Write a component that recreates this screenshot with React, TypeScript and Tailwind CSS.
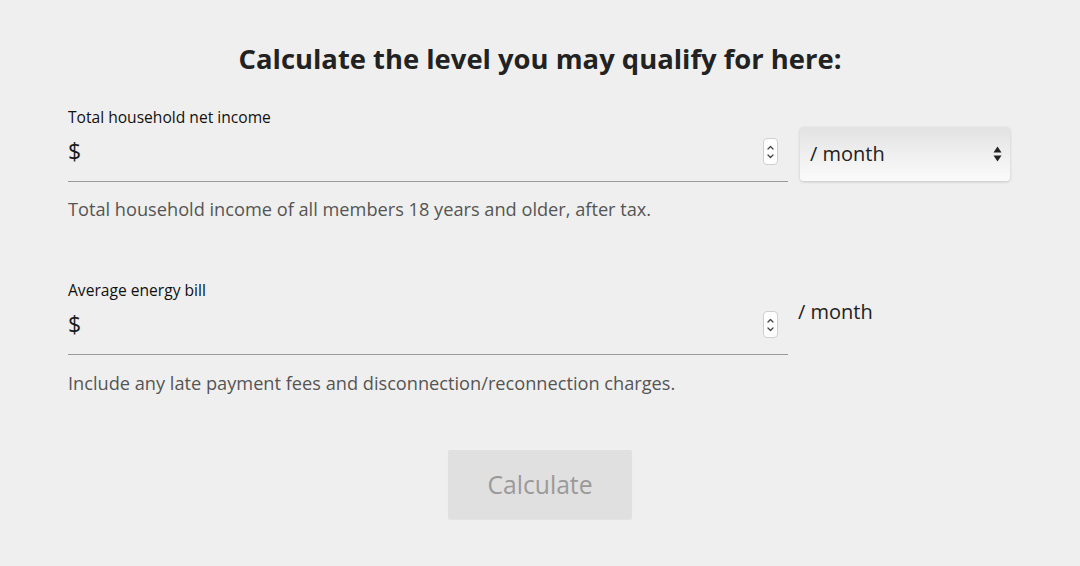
function Spinner() {
  return (
    <div className="flex h-[27px] w-[15px] flex-col items-center justify-center rounded-[4px] border border-[#cfcfcf] bg-white">
      <svg width="9" height="20" viewBox="0 0 9 20" fill="none" stroke="#444" strokeWidth="1.3" strokeLinecap="round" strokeLinejoin="round">
        <path d="M2 7 L4.5 4.5 L7 7" />
        <path d="M2 13 L4.5 15.5 L7 13" />
      </svg>
    </div>
  );
}

function MoneyInput() {
  return (
    <div className="flex h-[55px] w-[720px] items-center border-b border-[#9a9a9a] pb-[5px] pr-[10px]">
      <span className="text-[23px] leading-none text-[#1a1a1a]">$</span>
      <div className="flex-1" />
      <Spinner />
    </div>
  );
}

export default function App() {
  return (
    <main
      className="min-h-[566px] bg-[#efefef] pt-[39px] text-[#222]"
      style={{ fontFamily: '"Open Sans", "Liberation Sans", sans-serif' }}
    >
      <h2 className="text-center text-[27.4px] font-bold leading-[40px] text-[#222]">
        Calculate the level you may qualify for here:
      </h2>

      <div className="mx-auto w-[944px]">
        <div className="mt-[28px]">
          <label className="block text-[15.6px] leading-[20px] text-[#111]">Total household net income</label>
          <div className="flex items-start gap-[12px]">
            <MoneyInput />
            <div className="flex h-[54px] w-[210px] items-center justify-between rounded-[4px] bg-gradient-to-b from-[#e2e2e2] via-[#efefef] to-[#fbfbfb] pl-[10px] pr-[8px] shadow-[0_1px_3px_rgba(0,0,0,0.18)]">
              <span className="text-[20px] text-[#222]">/ month</span>
              <svg width="9" height="20" viewBox="0 0 9 20" fill="#222">
                <path d="M0.5 8.5 L4.5 2.5 L8.5 8.5 Z" />
                <path d="M0.5 11.5 L4.5 17.5 L8.5 11.5 Z" />
              </svg>
            </div>
          </div>
          <p className="mt-[15px] text-[18.2px] leading-[24px] text-[#555]">
            Total household income of all members 18 years and older, after tax.
          </p>
        </div>

        <div className="mt-[59px]">
          <label className="block text-[15.6px] leading-[20px] text-[#111]">Average energy bill</label>
          <div className="flex items-start gap-[10px]">
            <MoneyInput />
            <span className="text-[20px] leading-[24px] text-[#222]">/ month</span>
          </div>
          <p className="mt-[16px] text-[18.2px] leading-[24px] text-[#555]">
            Include any late payment fees and disconnection/reconnection charges.
          </p>
        </div>
      </div>

      <div className="mt-[55px] flex justify-center">
        <button className="h-[69px] w-[184px] rounded-[2px] bg-[#e0e0e0] text-[24.7px] text-[#9a9a9a] shadow-[0_1px_1px_rgba(0,0,0,0.05)]">
          Calculate
        </button>
      </div>
    </main>
  );
}
